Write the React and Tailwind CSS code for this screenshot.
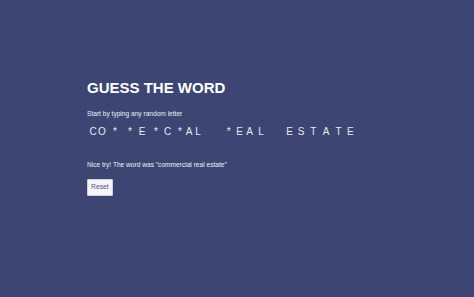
import React from "react";

const letters = [
  ["C", "ml-0"],
  ["O", "-ml-[3px]"],
  ["*", "ml-[1px]"],
  ["*", "ml-[3px]"],
  ["E", "ml-0"],
  ["*", "ml-[2px]"],
  ["C", "-ml-[0.5px]"],
  ["*", "ml-[0.5px]"],
  ["A", "-ml-[3px]"],
  ["L", "-ml-[3px]"],
  ["*", "ml-[18.7px]"],
  ["E", "-ml-[1px]"],
  ["A", "-ml-[2.2px]"],
  ["L", "-ml-[0.5px]"],
  ["E", "ml-[16.5px]"],
  ["S", "-ml-[0.5px]"],
  ["T", "ml-[0.3px]"],
  ["A", "ml-[0.8px]"],
  ["T", "ml-[0.5px]"],
  ["E", "-ml-[0.2px]"],
];

export default function App() {
  return (
    <div
      className="w-[474px] h-[297px] bg-[#3d4673] overflow-hidden pl-[87px] pt-[78.8px] flex flex-col items-start"
      style={{ fontFamily: '"Liberation Sans", Arial, sans-serif' }}
    >
      <h1 className="text-[15px] leading-[18px] font-bold text-white">GUESS THE WORD</h1>
      <p className="mt-[13px] text-[6.6px] leading-[8px] text-[#eceef6]">
        Start by typing any random letter
      </p>
      <div className="mt-[7.8px] flex text-[10px] leading-[12px] text-[#e6e8f2]">
        {letters.map(([ch, cls], i) => (
          <span key={i} className={`w-[12px] shrink-0 flex justify-center ${cls}`}>
            {ch}
          </span>
        ))}
      </div>
      <p className="mt-[23.2px] text-[6.6px] leading-[8px] text-[#eceef6]">
        Nice try! The word was "commercial real estate"
      </p>
      <button className="mt-[10px] bg-[#f6f6f9] border border-[#cfd0dc] rounded-[1px] px-[3px] pt-[3px] pb-[4px] text-[6.8px] leading-[8px] text-[#55508a]">
        Reset
      </button>
    </div>
  );
}
